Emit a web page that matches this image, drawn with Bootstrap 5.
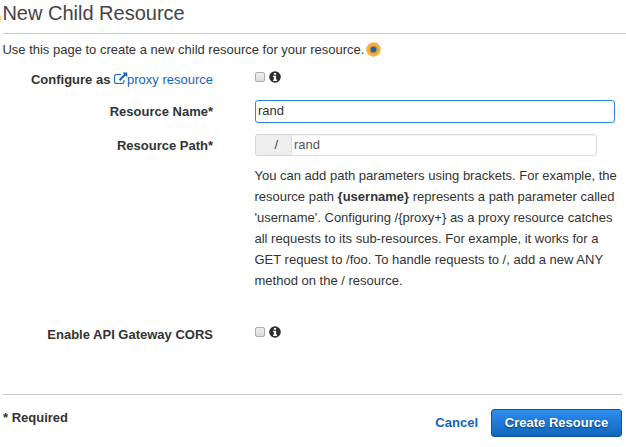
<!DOCTYPE html>
<html lang="en">
<head>
<meta charset="utf-8">
<meta name="viewport" content="width=device-width, initial-scale=1">
<title>New Child Resource</title>
<link href="https://cdn.jsdelivr.net/npm/bootstrap@5.3.0/dist/css/bootstrap.min.css" rel="stylesheet">
<style>
body{font:13px/21px "Liberation Sans",Arial,sans-serif;color:#333;overflow:hidden}
a{color:#1166bb}
.page{position:relative;height:447px;padding-left:3px}
.edge-glow{position:absolute;left:-5px;top:14px;width:6px;height:9px;border-radius:50%;background:#fbc070}
.page-title{font-size:20px;line-height:26px;height:34px;color:#444;border-bottom:1px solid #c8c8c8;text-indent:-.6px}
.intro{height:31px;padding-top:5px;text-indent:-.6px}
.pulse{width:15px;height:15px;margin-left:2px;margin-top:3px}
.field-label{width:211px;padding-right:1px;font-weight:700;text-align:right;flex:none}
.link-icon{width:14px;height:13px;vertical-align:-1px;margin-right:-1px}
.field-body{margin-left:41px}
.row-proxy{height:35px;padding-top:4px}
.row-name{height:34px}
.row-path{height:31px}
.row-cors{height:70px}
.row-name .field-label,.row-path .field-label,.row-cors .field-label{padding-top:1px}
.check-line{padding-top:3px}
.row-cors .check-line{padding-top:4px}
.check{appearance:none;width:10px;height:10px;margin:0;border:1px solid #aaa;border-radius:2px;background:linear-gradient(#eee,#dcdcdc)}
.info{width:12px;height:12px;margin-left:4px;margin-top:-1px}
.name-input,.path-input,.slash{font-size:13px;line-height:19px;padding:0 3px;border-radius:3px}
.name-input{width:360px;height:23px;padding:0 2px 2px;border:1px solid #2e86d8;color:#333}
.name-input:focus{box-shadow:none}
.path-group{width:342px;height:22px}
.slash{width:37px;padding:0 13px 1px 0;justify-content:flex-end;background:#eee;border-color:#d6d6d6;color:#444}
.path-input{padding:0 2px 2px;border-color:#ddd;color:#555;box-shadow:inset 0 1px 1px rgba(0,0,0,.06)}
.help{width:371px;height:158px;margin-left:251.5px;white-space:nowrap}
.foot{width:619px;margin-top:1px;border-top:1px solid #c8c8c8;padding-top:12px}
.cancel{margin:5px 13px 0 0}
.btn-create{width:131px;height:28px;margin-top:2px;padding:0;border:1px solid #10549a;border-radius:3px;background:linear-gradient(#2e8df0,#1166bb);color:#fff;font-size:13px;font-weight:700;line-height:26px;text-shadow:0 1px 2px #073b70}
.btn-create:hover{color:#fff}
</style>
</head>
<body>
<svg class="d-none">
<symbol id="info-icon" viewBox="0 0 12 12"><circle cx="6" cy="6" r="5.8" fill="#2b2f33"/><path d="M4.9 2h2.2v1.8H4.9zM4.1 4.8h3v3.7h.9V10H4.1V8.5H5V6.2h-.9z" fill="#fff"/></symbol>
</svg>
<main class="page">
<span class="edge-glow"></span>
<h1 class="page-title m-0 fw-normal">New Child Resource</h1>
<p class="intro m-0 d-flex align-items-start"><span>Use this page to create a new child resource for your resource.</span><svg class="pulse" viewBox="0 0 15 15"><circle cx="7.5" cy="7.5" r="7.2" fill="#fcae35"/><circle cx="7.5" cy="7.5" r="4" fill="#b99450"/><circle cx="7.5" cy="7.5" r="2.8" fill="#1166bb"/></svg></p>
<form>
<div class="row-proxy d-flex">
<label class="field-label" for="proxy">Configure as <a class="fw-normal text-decoration-none" href="#"><svg class="link-icon" viewBox="0 0 14 13"><path d="M7 2.5H2.3Q.6 2.5.6 4.2v5.6q0 1.7 1.7 1.7h6q1.7 0 1.7-1.7V8" fill="none" stroke="#1166bb" stroke-width="1.1"/><path d="M8.5.5h4.8v4.8l-1.7-1.7-5.3 5.3-1.5-1.5 5.3-5.3z" fill="#1166bb"/></svg>proxy resource</a></label>
<div class="field-body check-line d-flex align-items-start"><input class="check" id="proxy" type="checkbox"><svg class="info"><use href="#info-icon"/></svg></div>
</div>
<div class="row-name d-flex align-items-start">
<label class="field-label" for="name">Resource Name*</label>
<div class="field-body"><input class="form-control name-input" id="name" value="rand"></div>
</div>
<div class="row-path d-flex align-items-start">
<label class="field-label" for="path">Resource Path*</label>
<div class="field-body"><div class="input-group path-group flex-nowrap"><span class="input-group-text slash">/</span><input class="form-control path-input" id="path" value="rand"></div></div>
</div>
<div class="help">You can add path parameters using brackets. For example, the<br>resource path <b>{username}</b> represents a path parameter called<br>'username'. Configuring /{proxy+} as a proxy resource catches<br>all requests to its sub-resources. For example, it works for a<br>GET request to /foo. To handle requests to /, add a new ANY<br>method on the / resource.</div>
<div class="row-cors d-flex">
<label class="field-label" for="cors">Enable API Gateway CORS</label>
<div class="field-body check-line d-flex align-items-start"><input class="check" id="cors" type="checkbox"><svg class="info"><use href="#info-icon"/></svg></div>
</div>
<div class="foot d-flex align-items-start">
<b class="me-auto">* Required</b>
<a class="cancel fw-bold text-decoration-none" href="#">Cancel</a>
<button class="btn btn-create" type="button">Create Resource</button>
</div>
</form>
</main>
<script src="https://cdn.jsdelivr.net/npm/bootstrap@5.3.0/dist/js/bootstrap.bundle.min.js"></script>
</body>
</html>
